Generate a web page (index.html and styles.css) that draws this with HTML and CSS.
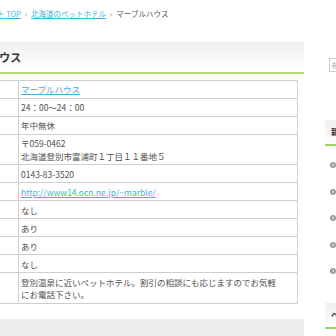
FILE: index.html
```html
<!DOCTYPE html>
<html lang="ja">
<head>
<meta charset="utf-8">
<title>マーブルハウス</title>
<link rel="stylesheet" href="styles.css">
</head>
<body>
<div class="page">
  <div class="crumbs">
    <a href="#">ペットホテルサイト TOP</a><span class="sep">›</span><a href="#">北海道のペットホテル</a><span class="sep">›</span><span>マーブルハウス</span>
  </div>
  <div class="layout">
    <main class="main">
      <h1 class="title">マーブルハウス</h1>
      <div class="table-wrap">
        <table class="info">
          <tr><th>施設名</th><td><a href="#">マーブルハウス</a></td></tr>
          <tr><th>営業時間</th><td>24：00〜24：00</td></tr>
          <tr><th>定休日</th><td>年中無休</td></tr>
          <tr><th>住所</th><td>〒059-0462<br>北海道登別市富浦町１丁目１１番地５</td></tr>
          <tr><th>電話番号</th><td>0143-83-3520</td></tr>
          <tr><th>URL</th><td><a href="#">http://www14.ocn.ne.jp/~marble/</a></td></tr>
          <tr><th>送迎</th><td>なし</td></tr>
          <tr><th>猫</th><td>あり</td></tr>
          <tr><th>駐車場</th><td>あり</td></tr>
          <tr><th>トリミング</th><td>なし</td></tr>
          <tr><th>備考</th><td>登別温泉に近いペットホテル。割引の相談にも応じますのでお気軽にお電話下さい。</td></tr>
        </table>
      </div>
      <div class="gray-box"></div>
    </main>
    <aside class="side">
      <div class="search"><span class="ph">検索</span></div>
      <div class="widget">
        <h2 class="w-head">新着ペットホテル</h2>
        <ul class="w-list">
          <li><span class="dot"><svg viewBox="0 0 6 6" width="6" height="6"><path d="M2.4 1.6 L3.8 3 L2.4 4.4" fill="none" stroke="#fff" stroke-width="1"/></svg></span>ペットホテル</li>
          <li><span class="dot"><svg viewBox="0 0 6 6" width="6" height="6"><path d="M2.4 1.6 L3.8 3 L2.4 4.4" fill="none" stroke="#fff" stroke-width="1"/></svg></span>ペットホテル</li>
          <li><span class="dot"><svg viewBox="0 0 6 6" width="6" height="6"><path d="M2.4 1.6 L3.8 3 L2.4 4.4" fill="none" stroke="#fff" stroke-width="1"/></svg></span>ペットホテル</li>
          <li><span class="dot"><svg viewBox="0 0 6 6" width="6" height="6"><path d="M2.4 1.6 L3.8 3 L2.4 4.4" fill="none" stroke="#fff" stroke-width="1"/></svg></span>ペットホテル</li>
          <li><span class="dot"><svg viewBox="0 0 6 6" width="6" height="6"><path d="M2.4 1.6 L3.8 3 L2.4 4.4" fill="none" stroke="#fff" stroke-width="1"/></svg></span>ペットホテル</li>
        </ul>
      </div>
      <div class="widget">
        <h2 class="w-head">ペットホテル検索</h2>
      </div>
    </aside>
  </div>
</div>
</body>
</html>
```
FILE: styles.css
```css
html, body {
  margin: 0;
  padding: 0;
  background: #fff;
  overflow: hidden;
}
body {
  width: 336px;
  height: 336px;
  font-family: "Noto Sans CJK JP", "Noto Sans", sans-serif;
  color: #505050;
}
.page {
  margin-left: -65px;
  width: 640px;
}
a {
  color: #3fb3de;
  text-decoration: underline;
}
.crumbs {
  display: flex;
  justify-content: flex-start;
  padding: 9px 0 0;
  height: 10px;
  font-size: 7.5px;
  line-height: 10px;
  color: #555;
  white-space: nowrap;
}
.crumbs > a:first-child {
  margin-left: 2px;
}
.sep {
  color: #888;
  margin: 0 4px;
}
.layout {
  display: flex;
  align-items: flex-start;
}
.main {
  width: 369px;
  flex: none;
}
.title {
  margin: 23px 0 0;
  height: 30px;
  padding-left: 10px;
  font-size: 11px;
  line-height: 30px;
  font-weight: bold;
  color: #333;
  background: linear-gradient(#efefef, #fff);
  border-bottom: 2px solid #b9db76;
}
.table-wrap {
  padding: 6px 6px 0;
}
.info {
  width: 100%;
  border-collapse: collapse;
  font-size: 8.5px;
  line-height: 12.4px;
}
.info th,
.info td {
  border: 1px solid #cfcfcf;
  padding: 2.3px 16px 2.3px 2.5px;
  text-align: left;
  vertical-align: top;
  font-weight: normal;
}
.info th {
  width: 57px;
  background: #fff;
}
.gray-box {
  margin-top: 15px;
  height: 40px;
  background: #eeeeee;
}
.side {
  margin-left: 21px;
  width: 200px;
  flex: none;
}
.search {
  margin: 39px 0 0 4px;
  height: 12px;
  border: 1px solid #cccccc;
  font-size: 7px;
  line-height: 12px;
  padding-left: 2px;
}
.ph {
  color: #aaa;
}
.widget + .widget {
  margin-top: 18px;
}
.search + .widget {
  margin-top: 48px;
}
.w-head {
  margin: 0;
  height: 24px;
  padding-left: 6px;
  font-size: 8px;
  line-height: 24px;
  font-weight: bold;
  color: #333;
  background: linear-gradient(#efefef, #fff);
  border-bottom: 2px solid #9bd36a;
}
.w-list {
  list-style: none;
  margin: 0;
  padding: 6px 0 0;
}
.w-list li {
  height: 26.5px;
  display: flex;
  align-items: center;
  padding-left: 5px;
  font-size: 8px;
  color: #555;
}
.dot {
  width: 6px;
  height: 6px;
  border-radius: 50%;
  background: #9a9a9a;
  margin-right: 5px;
  display: flex;
}
```
